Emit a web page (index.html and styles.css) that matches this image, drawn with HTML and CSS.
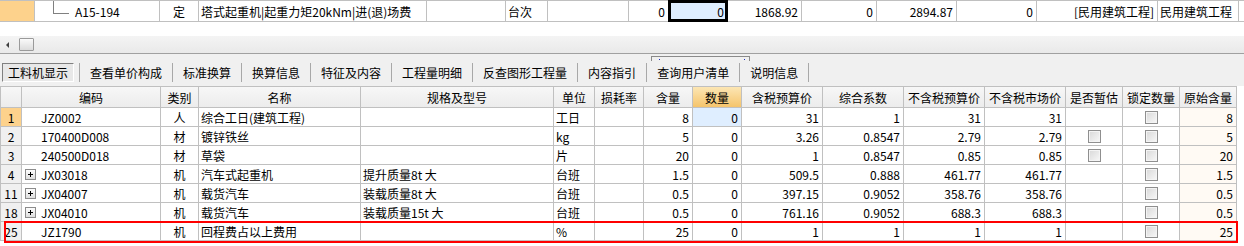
FILE: index.html
```html
<!DOCTYPE html>
<html lang="zh-CN">
<head>
  <meta charset="UTF-8" />
  <title>工料机显示</title>
  <link rel="stylesheet" href="styles.css">
</head>
<body>
  <!-- parent quota row (partly scrolled out of view) -->
  <div class="top-row">
    <div class="cell mark"></div>
    <div class="cell tree"><span class="tree-line"></span>A15-194</div>
    <div class="cell center">定</div>
    <div class="cell">塔式起重机|起重力矩20kNm|进(退)场费</div>
    <div class="cell"></div>
    <div class="cell">台次</div>
    <div class="cell"></div>
    <div class="cell num">0</div>
    <div class="cell num selected">0</div>
    <div class="cell num">1868.92</div>
    <div class="cell num">0</div>
    <div class="cell num">2894.87</div>
    <div class="cell num">0</div>
    <div class="cell num">[民用建筑工程]</div>
    <div class="cell">民用建筑工程</div>
    <div class="cell"></div>
  </div>

  <div class="hscroll">
    <span class="arrow-left"></span>
    <span class="thumb"></span>
  </div>

  <div class="tabbar">
    <span class="tab active">工料机显示</span>
    <span class="tab">查看单价构成</span>
    <span class="tab">标准换算</span>
    <span class="tab">换算信息</span>
    <span class="tab">特征及内容</span>
    <span class="tab">工程量明细</span>
    <span class="tab">反查图形工程量</span>
    <span class="tab">内容指引</span>
    <span class="tab">查询用户清单</span>
    <span class="tab last">说明信息</span>
    <div class="tip-stub"><i></i><i></i></div>
  </div>

  <div class="grid-wrap">
    <div class="grid" id="grid">
      <div class="hd"></div>
      <div class="hd">编码</div>
      <div class="hd">类别</div>
      <div class="hd">名称</div>
      <div class="hd">规格及型号</div>
      <div class="hd">单位</div>
      <div class="hd">损耗率</div>
      <div class="hd">含量</div>
      <div class="hd hd-active">数量</div>
      <div class="hd">含税预算价</div>
      <div class="hd">综合系数</div>
      <div class="hd">不含税预算价</div>
      <div class="hd">不含税市场价</div>
      <div class="hd">是否暂估</div>
      <div class="hd">锁定数量</div>
      <div class="hd">原始含量</div>
    </div>
    <div class="red-mark"></div>
  </div>

  <script src="script.js"></script>
</body>
</html>
```

FILE: script.js
```js
// rows of the labour / material / machine list
const rows = [
  { no: '1', tree: false, code: 'JZ0002', kind: '人', name: '综合工日(建筑工程)', spec: '', unit: '工日', amount: '8', qty: '0', price: '31', factor: '1', net: '31', market: '31', est: false, orig: '8' },
  { no: '2', tree: false, code: '170400D008', kind: '材', name: '镀锌铁丝', spec: '', unit: 'kg', amount: '5', qty: '0', price: '3.26', factor: '0.8547', net: '2.79', market: '2.79', est: true, orig: '5' },
  { no: '3', tree: false, code: '240500D018', kind: '材', name: '草袋', spec: '', unit: '片', amount: '20', qty: '0', price: '1', factor: '0.8547', net: '0.85', market: '0.85', est: true, orig: '20' },
  { no: '4', tree: true, code: 'JX03018', kind: '机', name: '汽车式起重机', spec: '提升质量8t 大', unit: '台班', amount: '1.5', qty: '0', price: '509.5', factor: '0.888', net: '461.77', market: '461.77', est: false, orig: '1.5' },
  { no: '11', tree: true, code: 'JX04007', kind: '机', name: '载货汽车', spec: '装载质量8t 大', unit: '台班', amount: '0.5', qty: '0', price: '397.15', factor: '0.9052', net: '358.76', market: '358.76', est: false, orig: '0.5' },
  { no: '18', tree: true, code: 'JX04010', kind: '机', name: '载货汽车', spec: '装载质量15t 大', unit: '台班', amount: '0.5', qty: '0', price: '761.16', factor: '0.9052', net: '688.3', market: '688.3', est: false, orig: '0.5' },
  { no: '25', tree: false, code: 'JZ1790', kind: '机', name: '回程费占以上费用', spec: '', unit: '%', amount: '25', qty: '0', price: '1', factor: '1', net: '1', market: '1', est: false, orig: '25' }
];

const grid = document.getElementById('grid');

function cell(cls, html) {
  const div = document.createElement('div');
  div.className = 'cell ' + cls;
  div.innerHTML = html;
  grid.appendChild(div);
}

const checkbox = '<span class="check"></span>';

rows.forEach((r, i) => {
  cell(i === 0 ? 'rowno current' : 'rowno', r.no);
  cell('code', '<span class="' + (r.tree ? 'expand' : 'expand blank') + '"></span>' + r.code);
  cell('center', r.kind);
  cell('', r.name);
  cell('', r.spec);
  cell('', r.unit);
  cell('', '');
  cell('num', r.amount);
  cell(i === 0 ? 'num focus' : 'num', r.qty);
  cell('num', r.price);
  cell('num', r.factor);
  cell('num', r.net);
  cell('num', r.market);
  cell('center', r.est ? checkbox : '');
  cell('center', checkbox);
  cell('num orig', r.orig);
});
```

FILE: styles.css
```css
body {
  margin: 0;
  width: 1244px;
  height: 246px;
  overflow: hidden;
  background: #fff;
  color: #000;
  font-family: "Noto Sans CJK SC", "Liberation Sans", sans-serif;
  font-size: 12px;
}

.cell {
  background: #fff;
  display: flex;
  align-items: center;
  padding: 0 2px;
  white-space: nowrap;
  overflow: hidden;
}

.cell.center {
  justify-content: center;
}

.cell.num {
  justify-content: flex-end;
  padding-right: 3px;
}

/* top row */
.top-row {
  display: grid;
  grid-template-columns: 34px 124px 38px 227px 78px 41px 80px 39px 58px 73px 74px 79px 79px 120px 80px 1fr;
  grid-auto-rows: 20px;
  gap: 1px;
  padding: 1px 0;
  background: #c0c0c0;
}

.top-row .mark {
  background: #fdd28c;
}

.top-row .tree {
  position: relative;
  padding-left: 40px;
}

.tree-line {
  position: absolute;
  left: 18px;
  top: 0;
  width: 15px;
  height: 12px;
  border-left: 1px solid #808080;
  border-bottom: 1px solid #808080;
}

.top-row .selected {
  position: relative;
  background: #dfeeff;
  box-shadow: 0 0 0 1px #000, inset 0 0 0 2px #000;
}

/* horizontal scrollbar */
.hscroll {
  margin-top: 14px;
  height: 17px;
  border-bottom: 1px solid #a0a0a0;
  background: linear-gradient(#f4f4f4, #e9e9e9);
  display: flex;
  align-items: center;
}

.arrow-left {
  width: 0;
  height: 0;
  margin-left: 6px;
  border-top: 3px solid transparent;
  border-bottom: 3px solid transparent;
  border-right: 3px solid #404040;
}

.thumb {
  width: 13px;
  height: 11px;
  margin-left: 10px;
  border: 1px solid #9a9a9a;
  border-radius: 1px;
  background: linear-gradient(#fafafa, #dcdcdc);
}

/* tabs */
.tabbar {
  position: relative;
  height: 32px;
  box-sizing: border-box;
  padding: 9px 0 0 2px;
  background: #f0f0f0;
  display: flex;
  align-items: flex-start;
}

.tab {
  height: 19px;
  line-height: 19px;
  padding: 0 10px;
  border-left: 1px solid #a8a8a8;
}

.tab.active {
  height: 17px;
  line-height: 17px;
  padding: 0 5px;
  margin-right: 5px;
  border: 1px solid;
  border-color: #808080 #ffffff #ffffff #808080;
  background: #e8e8e8;
}

.tab.last {
  border-right: 1px solid #a8a8a8;
}

.tip-stub {
  position: absolute;
  left: 651px;
  top: 2px;
  width: 97px;
  height: 4px;
  border: 1px solid #8a8a8a;
  border-bottom: none;
}

.tip-stub i {
  position: absolute;
  top: 2px;
  width: 1px;
  height: 1px;
  background: #2030c0;
}

.tip-stub i:first-child {
  left: 7px;
}

.tip-stub i:last-child {
  left: 92px;
}

/* material grid */
.grid-wrap {
  position: relative;
}

.grid {
  display: grid;
  grid-template-columns: 20px 138px 37px 161px 192px 40px 48px 48px 48px 80px 80px 80px 80px 56px 56px 56px;
  grid-template-rows: 20px;
  grid-auto-rows: 18px;
  gap: 1px;
  padding: 1px;
  width: max-content;
  background: #c0c0c0;
}

.hd {
  display: flex;
  align-items: center;
  justify-content: center;
  background: linear-gradient(#f7f7f7, #ececec);
  white-space: nowrap;
}

.hd-active {
  background: linear-gradient(#fce6b4, #f5c46c);
}

.rowno {
  justify-content: center;
  padding: 0;
  background: #f0f0f0;
}

.rowno.current {
  background: #fdd28c;
}

.code {
  padding-left: 3px;
}

.expand {
  width: 9px;
  height: 9px;
  margin-right: 5px;
  border: 1px solid #8c8c8c;
  background: linear-gradient(#fdfdfd, #dedede);
  position: relative;
  flex: none;
}

.expand::before,
.expand::after {
  content: "";
  position: absolute;
  background: #000;
}

.expand::before {
  left: 2px;
  top: 4px;
  width: 5px;
  height: 1px;
}

.expand::after {
  left: 4px;
  top: 2px;
  width: 1px;
  height: 5px;
}

.expand.blank {
  border-color: transparent;
  background: none;
}

.expand.blank::before,
.expand.blank::after {
  display: none;
}

.focus {
  background: #dfeeff;
}

.orig {
  background: #fffaf4;
}

.check {
  width: 11px;
  height: 11px;
  border: 1px solid #8f8f8f;
  box-shadow: inset 0 0 0 1px #f4f4f4;
  background: linear-gradient(135deg, #d8d8d8, #f8f8f8);
}

.red-mark {
  position: absolute;
  left: 4px;
  top: 135px;
  width: 1230px;
  height: 18px;
  border: 2px solid #ff0000;
}
```
